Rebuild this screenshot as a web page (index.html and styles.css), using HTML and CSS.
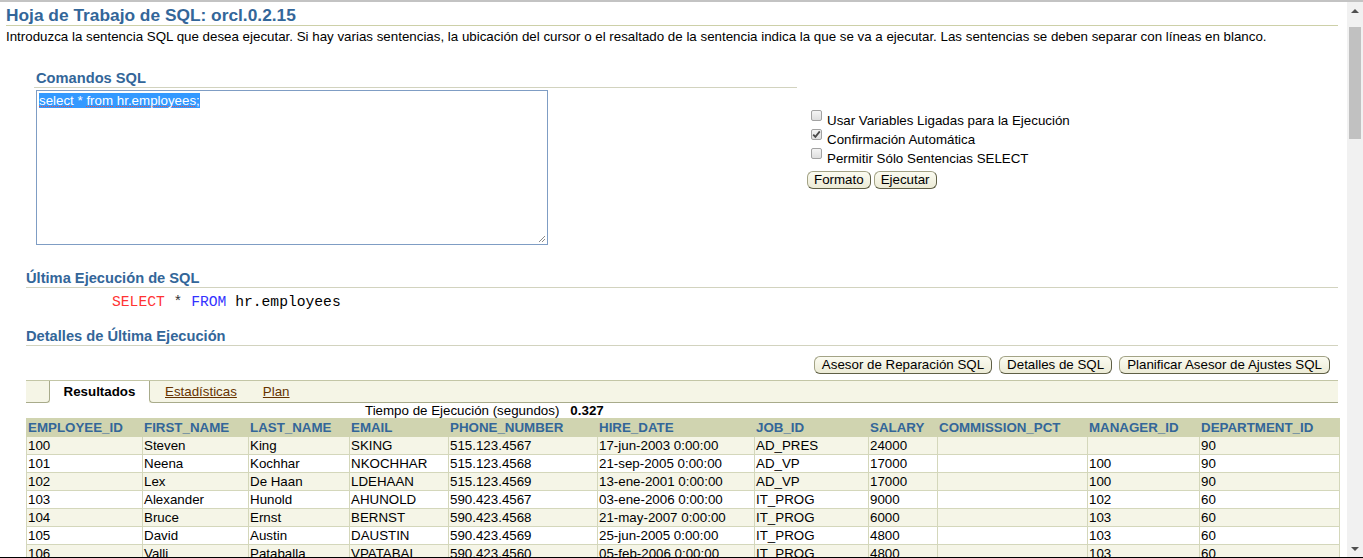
FILE: index.html
```html
<!DOCTYPE html>
<html lang="es">
<head>
<meta charset="utf-8">
<title>Hoja de Trabajo de SQL</title>
<link rel="stylesheet" href="styles.css">
</head>
<body>
<div class="window">
  <div class="viewport">
    <div class="page">
      <h1 class="title">Hoja de Trabajo de SQL: orcl.0.2.15</h1>
      <p class="intro">Introduzca la sentencia SQL que desea ejecutar. Si hay varias sentencias, la ubicación del cursor o el resaltado de la sentencia indica la que se va a ejecutar. Las sentencias se deben separar con líneas en blanco.</p>

      <div class="cmd-row">
        <div class="cmd-left">
          <h2 class="sub cmd-head">Comandos SQL</h2>
          <div class="textarea"><span class="sel"><span class="sp">select</span> * <span class="sp">from</span> <span class="sp">hr.employees</span>;</span><svg class="grip" width="9" height="9" viewBox="0 0 9 9"><path d="M8 2 L2 8 M8 5 L5 8" stroke="#8a8a8a" stroke-width="1" fill="none"/></svg></div>
        </div>
        <div class="cmd-right">
          <div class="opt"><span class="cb"></span>Usar Variables Ligadas para la Ejecución</div>
          <div class="opt"><span class="cb"><svg width="11" height="11" viewBox="0 0 11 11"><path d="M2.2 5.6 L4.4 7.9 L8.8 2.4" stroke="#4a4a4a" stroke-width="1.8" fill="none"/></svg></span>Confirmación Automática</div>
          <div class="opt"><span class="cb"></span>Permitir Sólo Sentencias SELECT</div>
          <div class="btns"><button class="btn">Formato</button><button class="btn">Ejecutar</button></div>
        </div>
      </div>

      <section class="results">
        <h2 class="sub sub-gap">Última Ejecución de SQL</h2>
        <pre class="code"><span class="kw-red">SELECT</span> <span class="star">*</span> <span class="kw-blue">FROM</span> hr.employees</pre>
        <h2 class="sub sub-gap2">Detalles de Última Ejecución</h2>
        <div class="tools">
          <button class="btn">Asesor de Reparación SQL</button>
          <button class="btn">Detalles de SQL</button>
          <button class="btn">Planificar Asesor de Ajustes SQL</button>
        </div>
        <div class="tabs">
          <div class="tab-gap"></div>
          <div class="tab-active">Resultados</div>
          <div class="tab-rest">
            <a class="tab-link" href="#">Estadísticas</a>
            <a class="tab-link" href="#">Plan</a>
          </div>
        </div>
        <div class="timing"><span>Tiempo de Ejecución (segundos)</span><b>0.327</b></div>
        <table class="grid">
          <colgroup>
            <col class="w116"><col class="w106"><col class="w101"><col class="w99"><col class="w149"><col class="w157"><col class="w114"><col class="w69"><col class="w150"><col class="w112"><col class="w140">
          </colgroup>
          <thead>
            <tr><th>EMPLOYEE_ID</th><th>FIRST_NAME</th><th>LAST_NAME</th><th>EMAIL</th><th>PHONE_NUMBER</th><th>HIRE_DATE</th><th>JOB_ID</th><th>SALARY</th><th>COMMISSION_PCT</th><th>MANAGER_ID</th><th>DEPARTMENT_ID</th></tr>
          </thead>
          <tbody>
            <tr><td>100</td><td>Steven</td><td>King</td><td>SKING</td><td>515.123.4567</td><td>17-jun-2003 0:00:00</td><td>AD_PRES</td><td>24000</td><td></td><td></td><td>90</td></tr>
            <tr><td>101</td><td>Neena</td><td>Kochhar</td><td>NKOCHHAR</td><td>515.123.4568</td><td>21-sep-2005 0:00:00</td><td>AD_VP</td><td>17000</td><td></td><td>100</td><td>90</td></tr>
            <tr><td>102</td><td>Lex</td><td>De Haan</td><td>LDEHAAN</td><td>515.123.4569</td><td>13-ene-2001 0:00:00</td><td>AD_VP</td><td>17000</td><td></td><td>100</td><td>90</td></tr>
            <tr><td>103</td><td>Alexander</td><td>Hunold</td><td>AHUNOLD</td><td>590.423.4567</td><td>03-ene-2006 0:00:00</td><td>IT_PROG</td><td>9000</td><td></td><td>102</td><td>60</td></tr>
            <tr><td>104</td><td>Bruce</td><td>Ernst</td><td>BERNST</td><td>590.423.4568</td><td>21-may-2007 0:00:00</td><td>IT_PROG</td><td>6000</td><td></td><td>103</td><td>60</td></tr>
            <tr><td>105</td><td>David</td><td>Austin</td><td>DAUSTIN</td><td>590.423.4569</td><td>25-jun-2005 0:00:00</td><td>IT_PROG</td><td>4800</td><td></td><td>103</td><td>60</td></tr>
            <tr><td>106</td><td>Valli</td><td>Pataballa</td><td>VPATABAL</td><td>590.423.4560</td><td>05-feb-2006 0:00:00</td><td>IT_PROG</td><td>4800</td><td></td><td>103</td><td>60</td></tr>
          </tbody>
        </table>
      </section>
    </div>
    <div class="scrollbar">
      <div class="sb-btn"><span class="arrow-up"></span></div>
      <div class="sb-thumb"></div>
      <div class="sb-track"></div>
      <div class="sb-btn"><span class="arrow-down"></span></div>
    </div>
  </div>
</div>
</body>
</html>
```

FILE: styles.css
```css
html, body {
  margin: 0;
  padding: 0;
  background: #ffffff;
}

body {
  width: 1363px;
  height: 558px;
  overflow: hidden;
  font-family: "Liberation Sans", Arial, sans-serif;
  font-size: 13.33px;
  color: #000000;
}

.window {
  height: 558px;
  box-sizing: border-box;
  border-top: 2px solid #c3c3c3;
  border-bottom: 1px solid #000000;
  display: flex;
  flex-direction: column;
}

.viewport {
  flex: 1;
  display: flex;
  min-height: 0;
}

.page {
  flex: 1;
  min-width: 0;
  overflow: hidden;
  padding: 0 9px 0 6px;
}

.title {
  margin: 3px 0 0;
  font-size: 17.33px;
  line-height: 20px;
  font-weight: bold;
  color: #336699;
  border-bottom: 1px solid #cdd0a8;
}

.intro {
  margin: 3px 0 0;
  line-height: 16px;
  white-space: nowrap;
}

.sub {
  margin: 0;
  font-size: 14.67px;
  line-height: 17px;
  font-weight: bold;
  color: #336699;
  border-bottom: 1px solid #d2d3bf;
}

/* Comandos SQL */
.cmd-row {
  display: flex;
  margin: 25px 0 0 28px;
}

.cmd-left {
  width: 763px;
}

.cmd-head {
  padding-left: 2px;
}

.textarea {
  position: relative;
  margin: 2px 0 0 2px;
  width: 512px;
  height: 155px;
  box-sizing: border-box;
  border: 1px solid #7f9dc4;
  padding: 2px;
  line-height: 15px;
}

.sel {
  background: #3399ff;
  color: #ffffff;
}

.sp {
  text-decoration: underline dotted #e05050;
  text-decoration-thickness: 1px;
  text-underline-offset: 1px;
  text-decoration-skip-ink: none;
}

.grip {
  position: absolute;
  right: 1px;
  bottom: 1px;
}

.cmd-right {
  margin-left: 10px;
  padding-top: 40px;
}

.opt {
  height: 19px;
  line-height: 19px;
  white-space: nowrap;
}

.cb {
  display: inline-block;
  width: 11px;
  height: 11px;
  box-sizing: border-box;
  margin: 0 5px 4px 4px;
  vertical-align: baseline;
  border: 1px solid #a2a2a2;
  border-radius: 2px;
  background: linear-gradient(#f4f4f4, #dedede);
  position: relative;
}

.cb svg {
  position: absolute;
  left: -1px;
  top: -1px;
}

.btns {
  display: flex;
  gap: 3px;
  margin-top: 4px;
}

.btn {
  font-family: "Liberation Sans", Arial, sans-serif;
  font-size: 13.33px;
  color: #000000;
  height: 18px;
  line-height: 16px;
  padding: 0 6px;
  margin: 0;
  border: 1px solid;
  border-color: #a3a386 #5f5f46 #5f5f46 #a3a386;
  border-radius: 6px;
  background: linear-gradient(#fbfbf1, #ecebd6);
  white-space: nowrap;
}

/* Results area */
.results {
  margin-left: 20px;
}

.sub-gap {
  margin-top: 25px;
}

.code {
  margin: 5px 0 0;
  padding-left: 86px;
  font-family: "Liberation Mono", "Courier New", monospace;
  font-size: 14.67px;
  line-height: 18px;
  color: #000000;
}

.kw-red { color: #ff3333; }
.kw-blue { color: #3333ff; }
.star { color: #333333; }

.sub-gap2 {
  margin-top: 17px;
}

.tools {
  display: flex;
  justify-content: flex-end;
  gap: 7px;
  margin-top: 10px;
  padding-right: 8px;
}

.tools .btn {
  padding: 0 7px;
}

.tabs {
  display: flex;
  margin-top: 6px;
  height: 23px;
  box-sizing: border-box;
  border-top: 1px solid #c3c6a6;
  background: #f5f5e6;
}

.tab-gap {
  width: 23px;
  border-right: 1px solid #a8ab8b;
  border-bottom: 1px solid #a8ab8b;
  border-bottom-right-radius: 4px;
}

.tab-active {
  width: 99px;
  background: #ffffff;
  font-weight: bold;
  text-align: center;
  line-height: 21px;
  margin-bottom: -1px;
}

.tab-rest {
  flex: 1;
  display: flex;
  gap: 26px;
  padding-left: 15px;
  border-left: 1px solid #a8ab8b;
  border-bottom: 1px solid #a8ab8b;
  border-bottom-left-radius: 4px;
  line-height: 21px;
}

.tab-link {
  color: #663300;
  text-decoration: underline;
}

.timing {
  display: flex;
  gap: 11px;
  padding-left: 339px;
  line-height: 15px;
}

/* Grid */
.grid {
  border-collapse: collapse;
  table-layout: fixed;
  width: 1313px;
}

.w116 { width: 116px; }
.w106 { width: 106px; }
.w101 { width: 101px; }
.w99 { width: 99px; }
.w149 { width: 149px; }
.w157 { width: 157px; }
.w114 { width: 114px; }
.w69 { width: 69px; }
.w150 { width: 150px; }
.w112 { width: 112px; }
.w140 { width: 140px; }

.grid th {
  background: #d0d4b0;
  color: #336699;
  font-weight: bold;
  text-align: left;
  padding: 0 1px;
  height: 17px;
  line-height: 17px;
  border: 1px solid #d0d4b0;
  border-left-color: #e9ebd8;
  white-space: nowrap;
  overflow: hidden;
}

.grid th:first-child {
  border-left-color: #d0d4b0;
}

.grid td {
  padding: 0 1px;
  height: 17px;
  line-height: 17px;
  border: 1px solid #d4d7bb;
  white-space: nowrap;
  overflow: hidden;
}

.grid tbody tr:nth-child(odd) td {
  background: #f5f5e7;
}

.grid tbody tr:nth-child(even) td {
  background: #ffffff;
}

/* Scrollbar */
.scrollbar {
  width: 16px;
  background: #f1f1f1;
  display: flex;
  flex-direction: column;
  align-items: center;
}

.sb-btn {
  height: 17px;
  width: 16px;
  display: flex;
  align-items: center;
  justify-content: center;
}

.arrow-up {
  width: 0;
  height: 0;
  border-left: 4px solid transparent;
  border-right: 4px solid transparent;
  border-bottom: 4px solid #505050;
}

.arrow-down {
  width: 0;
  height: 0;
  border-left: 4px solid transparent;
  border-right: 4px solid transparent;
  border-top: 4px solid #505050;
}

.sb-thumb {
  width: 12px;
  height: 112px;
  margin-top: 8px;
  background: #c1c1c1;
}

.sb-track {
  flex: 1;
}
```
